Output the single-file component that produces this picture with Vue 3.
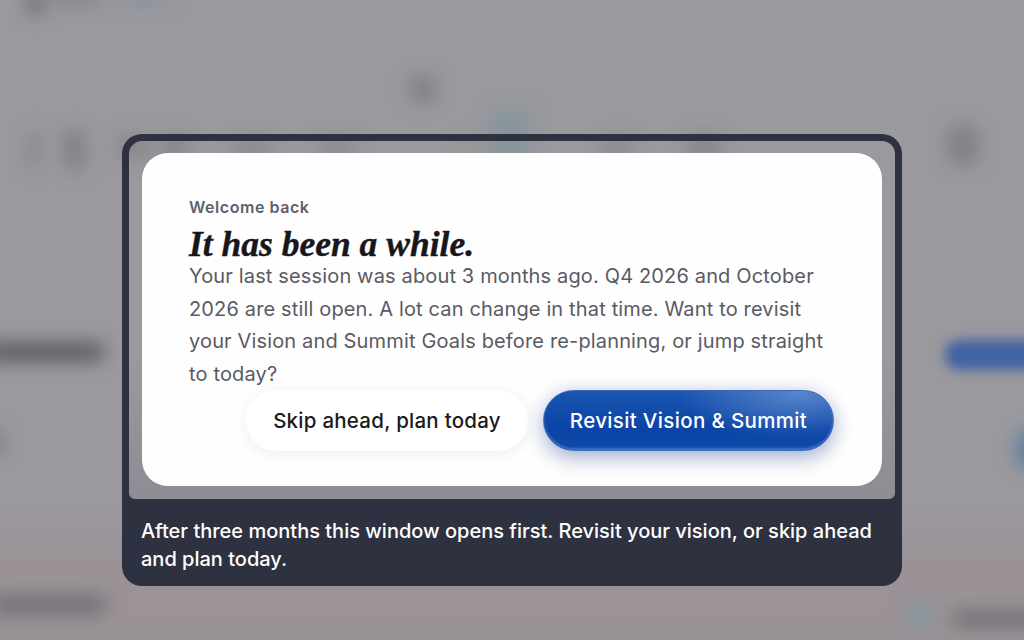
<script setup>
const blobs = [
  "top-icon", "top-name", "top-link", "nav-dot", "tab-active", "tab-warm", "tab-a", "tab-b", "tab-c", "tab-d",
  "tab-e", "tab-f", "tab-g", "tab-h", "tab-i", "side-title", "side-btn", "side-chip", "side-dot",
  "foot-left", "foot-dot", "foot-right"
];
</script>

<template>
  <main class="screen">
    <div class="backdrop" aria-hidden="true">
      <span v-for="blob in blobs" :key="blob" class="blob" :class="blob"></span>
    </div>

    <section class="frame">
      <div class="window">
        <div class="card">
          <p class="eyebrow">Welcome back</p>
          <h1>It has been a while.</h1>
          <p class="body">
            Your last session was about 3 months ago. Q4 2026 and October 2026 are still open. A lot can change in that time. Want to revisit your Vision and Summit Goals before re-planning, or jump straight to today?
          </p>
          <div class="actions">
            <button class="btn btn-ghost" type="button">Skip ahead, plan today</button>
            <button class="btn btn-primary" type="button">Revisit Vision &amp; Summit</button>
          </div>
        </div>
      </div>
      <p class="caption">After three months this window opens first. Revisit your vision, or skip ahead and plan today.</p>
    </section>
  </main>
</template>

<style scoped>
.screen {
  position: relative;
  display: flex;
  justify-content: center;
  align-items: flex-start;
  box-sizing: border-box;
  width: 1024px;
  height: 640px;
  padding-top: 134px;
  overflow: hidden;
  background: linear-gradient(180deg, #9a999e 0%, #9a999e 78%, #9a9297 88%, #9a9396 100%);
  font-family: "Inter", "Noto Sans", sans-serif;
}

.backdrop {
  position: absolute;
  inset: 0;
}

.blob {
  position: absolute;
  border-radius: 8px;
  background: #77767b;
  filter: blur(9px);
}

.top-icon { left: 28px; top: -10px; width: 14px; height: 24px; background: #66656a; }
.top-name { left: 48px; top: -8px; width: 52px; height: 12px; background: #807f85; }
.top-link { left: 120px; top: -8px; width: 50px; height: 12px; background: #87909e; }
.nav-dot { left: 410px; top: 76px; width: 26px; height: 26px; background: #807f84; }
.tab-active { left: 490px; top: 108px; width: 40px; height: 56px; background: #87959c; }
.tab-warm { left: 462px; top: 142px; width: 18px; height: 14px; background: #9a9488; }
.tab-a { left: 28px; top: 130px; width: 12px; height: 38px; background: #87868b; }
.tab-b { left: 64px; top: 130px; width: 20px; height: 40px; background: #807f84; }
.tab-c { left: 118px; top: 136px; width: 32px; height: 22px; background: #86858a; }
.tab-d { left: 163px; top: 136px; width: 24px; height: 22px; background: #828186; }
.tab-e { left: 233px; top: 140px; width: 38px; height: 18px; background: #88878c; }
.tab-f { left: 318px; top: 140px; width: 38px; height: 16px; background: #88878c; }
.tab-g { left: 603px; top: 138px; width: 28px; height: 20px; background: #88878c; }
.tab-h { left: 688px; top: 136px; width: 32px; height: 22px; background: #838287; }
.tab-i { left: 948px; top: 126px; width: 30px; height: 38px; background: #807f84; }
.side-title { left: -16px; top: 343px; width: 120px; height: 18px; background: #5a595e; }
.side-btn { left: 945px; top: 340px; width: 105px; height: 30px; border-radius: 14px; background: #4063a3; filter: blur(6px); }
.side-chip { left: -24px; top: 430px; width: 28px; height: 24px; background: #818085; }
.side-dot { left: 1018px; top: 432px; width: 24px; height: 36px; background: #56799f; }
.foot-left { left: -10px; top: 596px; width: 116px; height: 18px; background: #6f6e74; }
.foot-dot { left: 906px; top: 604px; width: 26px; height: 26px; border-radius: 50%; background: #869aa3; }
.foot-right { left: 952px; top: 610px; width: 100px; height: 18px; background: #747378; }

.frame {
  position: relative;
  flex: 0 0 auto;
  box-sizing: border-box;
  width: 780px;
  padding: 7px 7px 0;
  /* fills the notch the window shadow leaves where it meets the caption */
  background:
    linear-gradient(#2e3140, #2e3140) left bottom 80px / 7px 20px no-repeat,
    linear-gradient(#2e3140, #2e3140) right bottom 80px / 7px 20px no-repeat;
}

.window {
  position: relative;
  z-index: 1;
  box-sizing: border-box;
  height: 358px;
  padding: 12px 13px 13px;
  border-radius: 13px 13px 6px 6px;
  background: linear-gradient(180deg, rgba(140, 140, 148, 0) 60%, rgba(125, 125, 135, 0.45) 100%);
  box-shadow: 0 0 0 7px #2e3140;
}

.card {
  box-sizing: border-box;
  height: 333px;
  padding: 45px 48px 0 47px;
  border-radius: 26px;
  background: #fefefe;
}

.eyebrow {
  margin: 0;
  color: #5f5e6e;
  font-size: 16px;
  font-weight: 600;
  line-height: 18px;
  letter-spacing: 0.55px;
}

h1 {
  margin: 13px 0 0;
  color: #17171b;
  font-family: "Liberation Serif", serif;
  font-size: 35.5px;
  font-style: italic;
  font-weight: 700;
  line-height: 31px;
  -webkit-text-stroke: 0.4px #17171b;
}

.body {
  margin: 0;
  color: #5a5a64;
  font-size: 20px;
  font-weight: 400;
  line-height: 32.5px;
  letter-spacing: 0.15px;
}

.actions {
  display: flex;
  justify-content: flex-end;
  gap: 15px;
}

.btn {
  height: 61px;
  border-radius: 31px;
  font-family: inherit;
  font-size: 20.5px;
  font-weight: 500;
  letter-spacing: 0.25px;
  cursor: pointer;
}

.btn-ghost {
  width: 282px;
  border: 0;
  background: #fff;
  box-shadow: 0 3px 14px rgba(40, 40, 60, 0.07);
  color: #1b1b20;
}

.btn-primary {
  width: 291px;
  border: 1px solid #3c69c0;
  background:
    radial-gradient(120px 46px at 88% 4%, rgba(130, 165, 220, 0.6), rgba(130, 165, 220, 0) 100%),
    linear-gradient(180deg, #1a55b0 0%, #0a44a6 65%, #104aaa 100%);
  box-shadow: 0 8px 20px rgba(20, 50, 120, 0.3), 0 0 18px rgba(30, 80, 170, 0.14), inset 0 -2px 2px rgba(255, 255, 255, 0.22);
  color: #fff;
  letter-spacing: 0.35px;
}

.caption {
  margin: 0 -7px;
  padding: 18px 19px 13px;
  border-radius: 0 0 20px 20px;
  background: #2e3140;
  color: #fff;
  font-size: 20px;
  font-weight: 500;
  line-height: 28px;
}
</style>
